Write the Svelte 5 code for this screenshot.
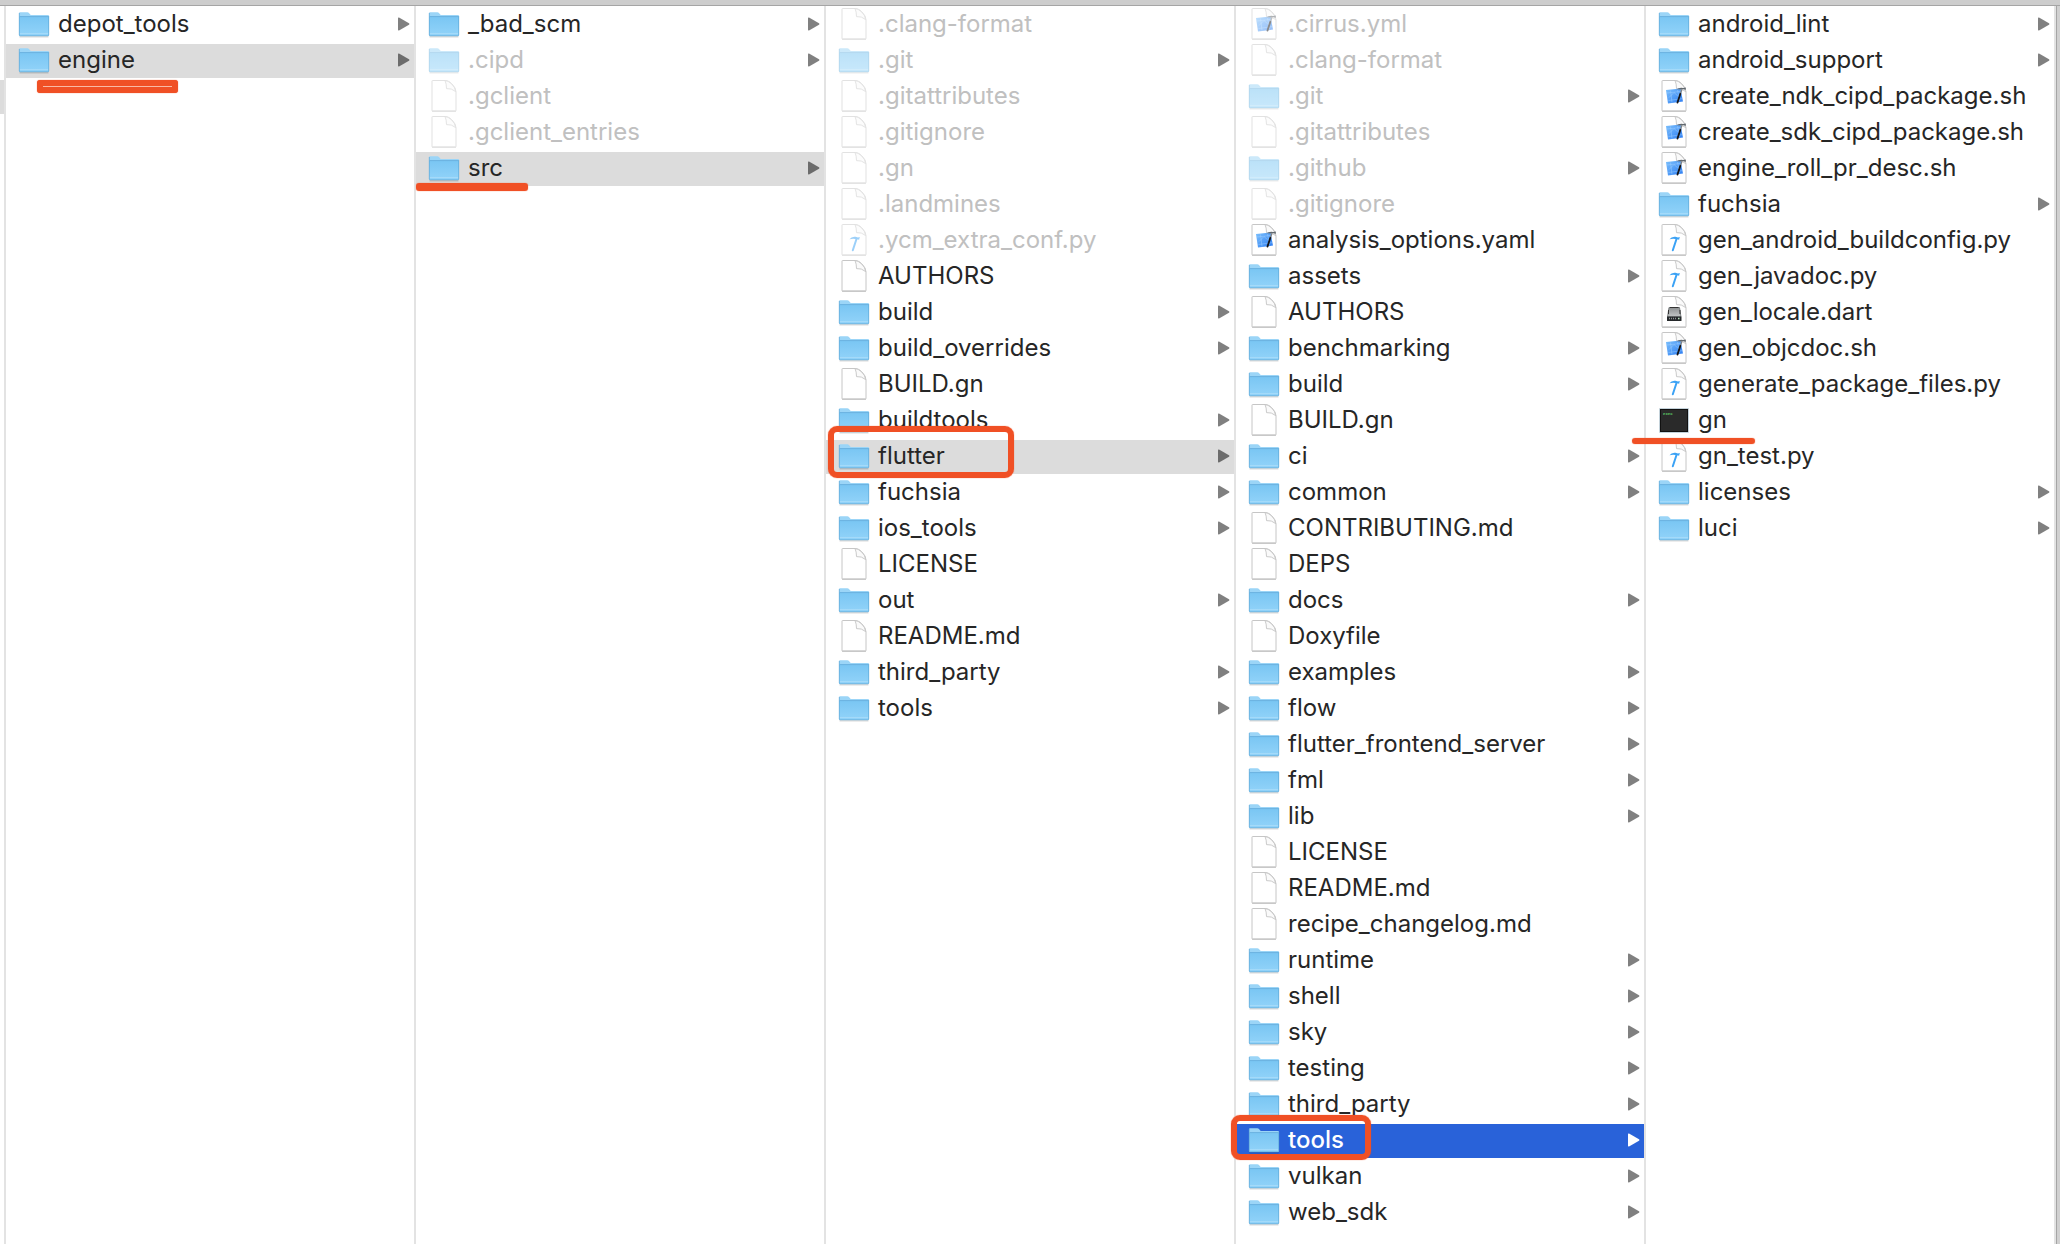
<script>
	// names ending in "/" are folders, the rest get an icon from their extension
	const columns = [
		['depot_tools/', 'engine/'],
		['_bad_scm/', '.cipd/', '.gclient', '.gclient_entries', 'src/'],
		[
			'.clang-format', '.git/', '.gitattributes', '.gitignore', '.gn', '.landmines',
			'.ycm_extra_conf.py', 'AUTHORS', 'build/', 'build_overrides/', 'BUILD.gn',
			'buildtools/', 'flutter/', 'fuchsia/', 'ios_tools/', 'LICENSE', 'out/',
			'README.md', 'third_party/', 'tools/'
		],
		[
			'.cirrus.yml', '.clang-format', '.git/', '.gitattributes', '.github/', '.gitignore',
			'analysis_options.yaml', 'assets/', 'AUTHORS', 'benchmarking/', 'build/', 'BUILD.gn',
			'ci/', 'common/', 'CONTRIBUTING.md', 'DEPS', 'docs/', 'Doxyfile', 'examples/',
			'flow/', 'flutter_frontend_server/', 'fml/', 'lib/', 'LICENSE', 'README.md',
			'recipe_changelog.md', 'runtime/', 'shell/', 'sky/', 'testing/', 'third_party/',
			'tools/', 'vulkan/', 'web_sdk/'
		],
		[
			'android_lint/', 'android_support/', 'create_ndk_cipd_package.sh',
			'create_sdk_cipd_package.sh', 'engine_roll_pr_desc.sh', 'fuchsia/',
			'gen_android_buildconfig.py', 'gen_javadoc.py', 'gen_locale.dart', 'gen_objcdoc.sh',
			'generate_package_files.py', 'gn', 'gn_test.py', 'licenses/', 'luci/'
		]
	];

	const marks = { '0engine/': 'engine', '1src/': 'src', '2flutter/': 'flutter', '3tools/': 'tools', '4gn': 'gn' };

	let selected = $state(['engine/', 'src/', 'flutter/', 'tools/', '']);
	let active = $state(3);

	/** @param {string} name */
	function kind(name) {
		if (name.endsWith('/')) return 'folder';
		if (name === 'gn') return 'exec';
		if (/\.(sh|ya?ml)$/.test(name)) return 'xcode';
		if (name.endsWith('.py')) return 'python';
		if (name.endsWith('.dart')) return 'dart';
		return 'file';
	}

	/**
	 * @param {number} ci
	 * @param {string} name
	 */
	function select(ci, name) {
		selected[ci] = name;
		active = ci;
	}
</script>

<svelte:head>
	<title>engine</title>
</svelte:head>

<svg class="defs" aria-hidden="true">
	<defs>
		<linearGradient id="front" x1="0" y1="0" x2="0" y2="1">
			<stop offset="0" stop-color="#7ac6f3" />
			<stop offset="1" stop-color="#92d3f9" />
		</linearGradient>
		<linearGradient id="blue" x1="0" y1="0" x2="1" y2="1">
			<stop offset="0" stop-color="#7cc0fc" />
			<stop offset="1" stop-color="#2c7cf2" />
		</linearGradient>
		<linearGradient id="metal" x1="0" y1="0" x2="0" y2="1">
			<stop offset="0" stop-color="#8d9091" />
			<stop offset="1" stop-color="#c4c7c8" />
		</linearGradient>
	</defs>
</svg>

{#snippet icon(type)}
	<svg class="icon" viewBox="0 0 32 34" aria-hidden="true">
		{#if type === 'folder'}
			<path d="M1.5 28.800h29" stroke="#000" stroke-opacity=".14" stroke-width="1.5" />
			<path d="M1 5.2Q1 4.3 2 4.3h7.3q1 0 1.7.8l1.2 1.3q.6.7 1.6.7H30q1 0 1 1V12H1z" fill="#9bd5f7" />
			<path d="M1 9h30v18q0 1-1 1H2q-1 0-1-1z" fill="url(#front)" />
			<path d="M1.5 8.6h29" stroke="#68b1df" stroke-width="1" />
			<path d="M1.5 25.5h29" stroke="#a9dcf9" stroke-width=".8" />
			<path d="M1.3 5v22q0 .8.8.8h27.8q.8 0 .8-.8V8" fill="none" stroke="#5fa8d6" stroke-width=".7" />
		{:else if type === 'exec'}
			<rect x="1" y="4" width="30" height="25" rx="1" fill="#c4d2da" />
			<rect x="2" y="5" width="28" height="23" fill="#111" />
			<rect x="3" y="6" width="26" height="21" fill="#2a2a2a" />
			<text class="exec" x="5" y="11">exec</text>
		{:else}
			<path d="M5 .5h13Q21 .8 24 4q4 4 4 8v18.5q0 .5-.5.5h-23q-.5 0-.5-.5V1q0-.5.5-.5z" fill="#fff" stroke="#c6c6c6" />
			<path d="M4 31.2h24" stroke="#b2b2b2" stroke-width=".8" />
			<path d="M17 .6q1.500 3 1.500 8 5-.6 9.200 3Q27 7 23.500 3.800 20 .6 17 .6z" fill="#fafafa" stroke="#c4c4c4" stroke-width=".9" />
			{#if type === 'xcode'}
				<path d="M8 10 22.500 8.500 25 21.500 10 23.500z" fill="url(#blue)" />
				<path d="M9 13l14-1.600M10.500 20.500l13.500-1.800M12.500 10.500l1.500 12M19.500 9.500l2 11.800M11 17.500l5-5 5.500 5" fill="none" stroke="#a9d6ff" stroke-opacity=".7" stroke-width=".6" />
				<path d="M23.800 9.500 22 15" stroke="#7b8288" stroke-width="1.400" />
				<path d="M22.300 14 19.500 22.500" stroke="#151518" stroke-width="1.900" stroke-linecap="round" />
				<path d="M18.500 9.600Q21 7.200 25 7.900l2.800-.5v2.300l-2.500-.5-2.800.4q-2-.6-4 0z" fill="#61686e" />
			{:else if type === 'python'}
				<path d="M18.500 15 14.800 26.300" stroke="#3ba2f5" stroke-width="2" stroke-linecap="round" />
				<path d="M11.500 15.200Q13.500 12.200 17.500 12.700l2.500.7 1.800-.3-.7 2.600-1.800-.5Q15 14.200 11.500 15.200z" fill="#3ba2f5" />
			{:else if type === 'dart'}
				<path d="M11 11.500h10.500L23 21H9.500z" fill="url(#metal)" stroke="#65696b" stroke-width=".8" />
				<path d="M12 11.500h8.500M10.500 14v4M22 14v4" stroke="#333" stroke-width="1" />
				<rect x="9" y="20.500" width="14.500" height="4.500" rx=".5" fill="#25282a" />
				<path d="M11 22.500h7" stroke="#8f9496" stroke-width="1.500" stroke-dasharray="1 1" />
				<rect x="20" y="21.800" width="1.500" height="1.500" fill="#b9e6c0" />
			{/if}
		{/if}
	</svg>
{/snippet}

<div class="finder">
	<div class="topbar"></div>
	<div class="browser">
		<div class="previous"><div class="rest"></div></div>
		{#each columns as items, ci}
			<ul class="column">
				{#each items as name}
					<li>
						<button
							class="row"
							class:hidden={name.startsWith('.')}
							class:selected={selected[ci] === name}
							class:active={selected[ci] === name && active === ci}
							onclick={() => select(ci, name)}
						>
							{@render icon(kind(name))}
							<span class="name">{name.replace('/', '')}</span>
							{#if name.endsWith('/')}
								<svg class="arrow" viewBox="0 0 12 16" aria-hidden="true">
									<path d="M1 .5 11 6.3q1 .7 0 1.4L1 13.5q-1 .3-1-.7V1.2Q0 .2 1 .5z" />
								</svg>
							{/if}
						</button>
						{#if marks[ci + name]}
							<span class="mark {marks[ci + name]}"></span>
						{/if}
					</li>
				{/each}
			</ul>
		{/each}
		<div class="edge"></div>
	</div>
</div>

<style>
	:global(body) {
		margin: 0;
		background: #fff;
	}
	.defs {
		position: absolute;
		width: 0;
		height: 0;
	}

	.finder {
		display: flex;
		flex-direction: column;
		min-height: 100vh;
		font-family: Inter, "Liberation Sans", sans-serif;
		color: #262626;
	}
	.topbar {
		height: 5px;
		background: #cdcdcd;
		border-bottom: 1px solid #a5a5a5;
	}
	.browser {
		flex: 1;
		display: grid;
		grid-template-columns: 6px repeat(5, minmax(0, 1fr)) 4px;
	}

	.previous {
		padding-top: 74px;
		border-right: 2px solid #e3e3e3;
	}
	.rest {
		height: 34px;
		background: #dcdcdc;
	}
	.edge {
		background: #d0d0d0;
		border-left: 1px solid #a5a5a5;
	}

	.column {
		margin: 0;
		padding: 2px 0 0;
		list-style: none;
		border-right: 2px solid #e3e3e3;
	}
	li {
		position: relative;
		height: 36px;
	}
	.row {
		display: flex;
		align-items: center;
		gap: 8px;
		width: 100%;
		height: 34px;
		padding: 0 4px 0 12px;
		border: 0;
		background: none;
		color: inherit;
		font: inherit;
		font-size: 24px;
		line-height: 32px;
		text-align: left;
	}
	.name {
		flex: 1;
		padding-bottom: 2px;
		white-space: nowrap;
	}
	.icon {
		flex: none;
		width: 32px;
		height: 34px;
	}
	.exec {
		font: bold 4px "Liberation Mono", monospace;
		fill: #5fd068;
	}
	.arrow {
		flex: none;
		width: 12px;
		height: 16px;
		fill: #808080;
	}

	.hidden .name {
		color: #c0c0c0;
	}
	.hidden .icon {
		opacity: 0.5;
	}
	.selected {
		background: #dcdcdc;
	}
	.selected .arrow {
		fill: #6c6c6c;
	}
	.active {
		background: #2962d9;
		color: #fff;
		font-weight: 500;
	}
	.active .arrow {
		fill: #fff;
	}

	/* red marker strokes over the path to gn */
	.mark {
		position: absolute;
		z-index: 1;
		box-sizing: border-box;
		border: 6px solid #f05025;
		border-radius: 9px;
		box-shadow: 0 0 1px #f05025;
		pointer-events: none;
	}
	.mark.engine {
		top: 36px;
		left: 31px;
		width: 141px;
		height: 13px;
		border-radius: 3px;
		background: #f9b9a5;
	}
	.mark.src {
		top: 31px;
		left: 0;
		width: 112px;
		height: 8px;
		border-width: 4px;
		border-radius: 3px;
	}
	.mark.flutter {
		top: -14px;
		left: 2px;
		width: 186px;
		height: 52px;
	}
	.mark.tools {
		top: -9px;
		left: -5px;
		width: 140px;
		height: 45px;
	}
	.mark.gn {
		top: 34px;
		left: -14px;
		width: 123px;
		height: 6px;
		border-width: 3px;
		border-radius: 3px;
	}
</style>
